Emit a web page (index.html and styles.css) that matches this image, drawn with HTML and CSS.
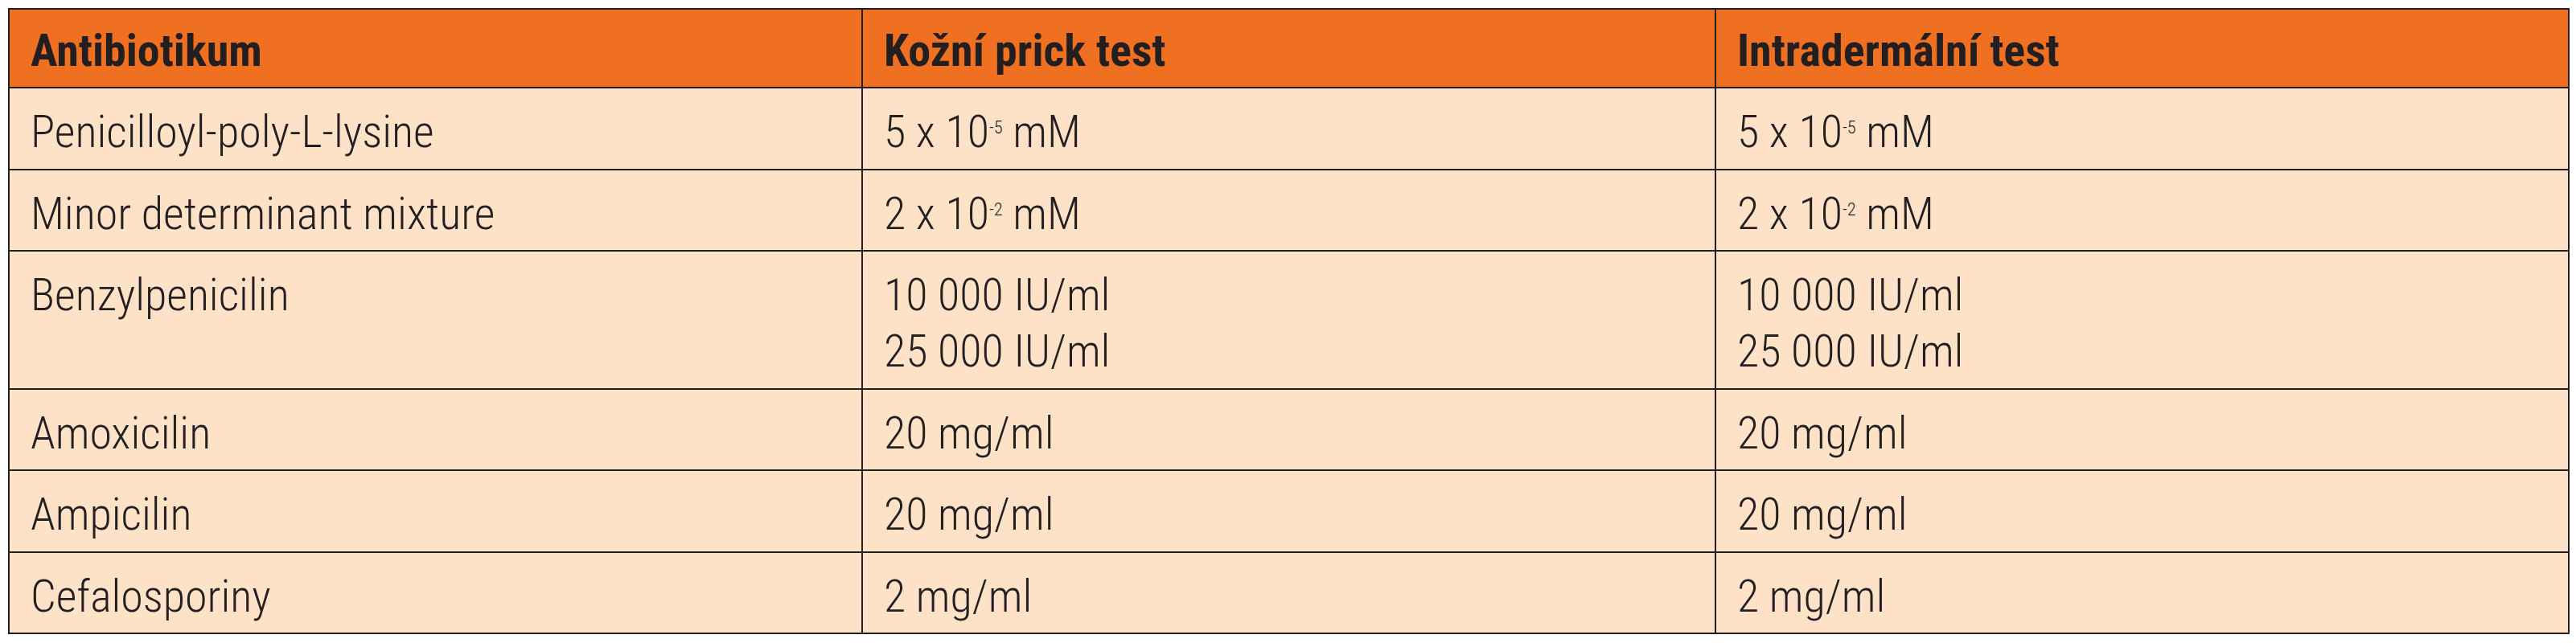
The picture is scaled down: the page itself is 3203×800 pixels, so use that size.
FILE: index.html
```html
<!DOCTYPE html>
<html lang="cs">
<head>
<meta charset="utf-8">
<title>Antibiotika – koncentrace</title>
<link rel="stylesheet" href="styles.css">
</head>
<body>
<table class="conc">
  <colgroup><col class="c"><col class="c"><col class="c"></colgroup>
  <thead>
    <tr>
      <th>Antibiotikum</th>
      <th>Kožní prick test</th>
      <th>Intradermální test</th>
    </tr>
  </thead>
  <tbody>
    <tr>
      <td>Penicilloyl-poly-L-lysine</td>
      <td>5 x 10<sup>-5</sup> mM</td>
      <td>5 x 10<sup>-5</sup> mM</td>
    </tr>
    <tr>
      <td>Minor determinant mixture</td>
      <td>2 x 10<sup>-2</sup> mM</td>
      <td>2 x 10<sup>-2</sup> mM</td>
    </tr>
    <tr>
      <td>Benzylpenicilin</td>
      <td>10 000 IU/ml<br>25 000 IU/ml</td>
      <td>10 000 IU/ml<br>25 000 IU/ml</td>
    </tr>
    <tr>
      <td>Amoxicilin</td>
      <td>20 mg/ml</td>
      <td>20 mg/ml</td>
    </tr>
    <tr>
      <td>Ampicilin</td>
      <td>20 mg/ml</td>
      <td>20 mg/ml</td>
    </tr>
    <tr>
      <td>Cefalosporiny</td>
      <td>2 mg/ml</td>
      <td>2 mg/ml</td>
    </tr>
  </tbody>
</table>
</body>
</html>
```
FILE: styles.css
```css
html, body {
  margin: 0;
  padding: 0;
  background: #ffffff;
}

.conc {
  margin: 10px 0 0 10px;
  width: 3185px;
  border-collapse: collapse;
  table-layout: fixed;
  color: #231f20;
  font-family: "Roboto Condensed", "Liberation Sans", sans-serif;
  font-size: 56px;
  line-height: 70px;
}

.conc th,
.conc td {
  border: 2px solid #231f20;
  text-align: left;
  vertical-align: top;
  padding: 19px 26px 10.5px 26px;
  white-space: nowrap;
}

.conc th {
  background: #f07022;
  font-weight: 700;
  padding-top: 16px;
  padding-bottom: 10px;
}

.conc td {
  background: #fde2c8;
  font-weight: 300;
}

.conc sup {
  font-size: 0.4em;
  line-height: 0;
  vertical-align: 0.75em;
}
```
